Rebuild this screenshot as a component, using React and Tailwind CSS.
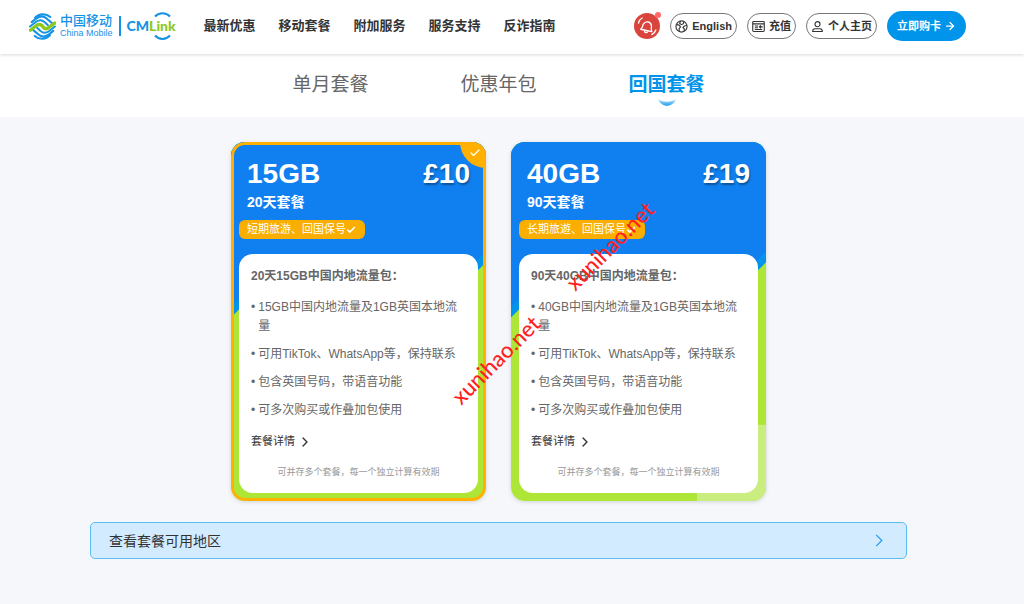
import React from "react";
import { LuArrowRight, LuCheck, LuChevronRight } from "react-icons/lu";

const navItems = ["最新优惠", "移动套餐", "附加服务", "服务支持", "反诈指南"];
const tabs = ["单月套餐", "优惠年包", "回国套餐"];

const sharedPerks = [
  "可用TikTok、WhatsApp等，保持联系",
  "包含英国号码，带语音功能",
  "可多次购买或作叠加包使用",
];

const plans = [
  { data: "15GB", days: "20天", price: "£10", tag: "短期旅游、回国保号", selected: true },
  { data: "40GB", days: "90天", price: "£19", tag: "长期旅遊、回国保号", selected: false },
];

function Logo() {
  return (
    <a href="#home" aria-label="中国移动 CMLink" className="flex items-center">
      <svg viewBox="0 0 80 80" className="h-[27px] w-[27px]" fill="none" strokeWidth="6" strokeLinecap="round">
        <g stroke="#1492e6">
          <path d="M18 14C30 1 50 0 63 12" />
          <path d="M8 27L22 16C33 8 44 9 52 16L68 30" />
          <path d="M3 40L21 26C31 19 39 20 46 27L56 36" />
          <path d="M62 66C50 79 30 80 17 68" />
          <path d="M72 53L58 64C47 72 36 71 28 64L12 50" />
          <path d="M77 40L59 54C49 61 41 60 34 53L24 44" />
        </g>
        <path d="M4 51L22 37C29 32 35 33 40 39L42 42C47 48 54 47 60 42L76 30" stroke="#8cc81e" strokeWidth="10" />
      </svg>
      <span className="ml-1 flex flex-col text-[#1492e6]">
        <span className="text-[13px] leading-[14px] font-medium">中国移动</span>
        <span className="text-[9px] leading-[11px]">China Mobile</span>
      </span>
      <span className="ml-1.5 h-5 w-0.5 bg-[#1492e6]" />
      <span className="relative ml-1.5 flex h-7 w-[50px] items-center font-['Lato',sans-serif] text-sm font-black text-[#1492e6]">
        CM<span className="text-[#8cc81e]">Link</span>
        <svg viewBox="0 0 52 28" className="absolute inset-0 h-7 w-[52px]" fill="none" stroke="#1492e6" strokeWidth="2">
          <path d="M28 4.500c4-4.500 11-4.500 15 0M28 23.500c4 4.500 11 4.500 15 0" />
        </svg>
      </span>
    </a>
  );
}

function GlobeIcon() {
  return (
    <svg viewBox="0 0 14 14" className="h-[13px] w-[13px]" fill="none" stroke="currentColor" strokeWidth="1.2">
      <circle cx="7" cy="7" r="6" />
      <path d="M1.500 5l3 .5 1.500 2-1.500 1.500v3.500M6 1.200L5 3.500l2 1.500 2-1 .5-2.500M12.800 6L10 6.500 8.500 8l1.500 1.500V12" />
    </svg>
  );
}

function TopUpIcon() {
  return (
    <svg viewBox="0 0 14 14" className="h-[13px] w-[13px]" fill="none" stroke="currentColor" strokeWidth="1.2">
      <rect x="0.800" y="1.600" width="12.400" height="10.800" rx="1" />
      <path d="M1 4.200h12M3 6.500h3.500M3 8.300h3.500M3 10.200h8M11.500 7.400H8M9.600 5.800L8 7.400l1.600 1.600" />
    </svg>
  );
}

function UserIcon() {
  return (
    <svg viewBox="0 0 14 14" className="h-[13px] w-[13px]" fill="none" stroke="currentColor" strokeWidth="1.200">
      <circle cx="7" cy="4.500" r="2.700" />
      <path d="M1.800 12.400c0-2 1-3 2.500-3h5.400c1.500 0 2.500 1 2.500 3z" strokeLinejoin="round" />
    </svg>
  );
}

function Bell() {
  return (
    <button type="button" aria-label="通知" className="relative h-[26px] w-[26px] rounded-full bg-[#d9453d]">
      <svg viewBox="0 0 26 26" className="h-full w-full" fill="none" stroke="#fff" strokeWidth="1.300" strokeLinecap="round" strokeLinejoin="round">
        <g transform="rotate(12 13 13)">
          <path d="M7.500 17.500c1.200-1.200 1.500-2 1.500-5.500a4.500 5 0 0 1 8.400 0c0 3.500.3 4.300 1.500 5.500zM11.500 17.900c.3 2.400 3 2.400 3.400 0" />
        </g>
        <path d="M4.500 10C5 7.800 6.300 6 8.200 5M21.800 17c-.6 2.200-1.900 3.700-4 4.600" />
      </svg>
      <span className="absolute -top-px -right-px h-1.5 w-1.5 rounded-full bg-[#ff6b6b]" />
    </button>
  );
}

function Pill({ icon, children }) {
  return (
    <button
      type="button"
      className="flex h-[26px] items-center gap-1 rounded-full border border-[#777] px-1 text-[11px] font-bold whitespace-nowrap text-[#333]"
    >
      {icon}
      {children}
    </button>
  );
}

function Header() {
  return (
    <header className="relative flex h-[54px] items-center bg-white pr-[58px] pb-0.5 pl-[29px] shadow-[0_1px_3px_rgba(0,0,0,0.15)]">
      <Logo />
      <nav className="ml-[27px] flex gap-[23px] text-[13px] font-bold whitespace-nowrap text-[#333]">
        {navItems.map((item) => (
          <a key={item} href="#nav">{item}</a>
        ))}
      </nav>
      <div className="ml-auto flex items-center gap-2.5">
        <Bell />
        <Pill icon={<GlobeIcon />}>English</Pill>
        <Pill icon={<TopUpIcon />}>充值</Pill>
        <Pill icon={<UserIcon />}>个人主页</Pill>
        <button type="button" className="flex h-[30px] items-center gap-[3px] rounded-full bg-[#0094ea] px-2.5 text-[11px] font-bold whitespace-nowrap text-white">
          立即购卡
          <LuArrowRight className="h-3 w-3" strokeWidth={2.5} />
        </button>
      </div>
    </header>
  );
}

function Tabs() {
  return (
    <div role="tablist" className="flex h-[63px] justify-center gap-[92px] bg-white pt-[17px] pr-[27px] text-[19px] leading-7 text-[#666]">
      {tabs.map((tab, i) => {
        const active = i === tabs.length - 1;
        return (
          <button
            key={tab}
            type="button"
            role="tab"
            aria-selected={active}
            className={active ? "flex flex-col items-center font-bold text-[#0094ea]" : "flex flex-col items-center"}
          >
            {tab}
            {active && (
              <svg viewBox="0 0 18 7" className="h-[7px] w-[18px]">
                <defs>
                  <linearGradient id="smile" x1="0" y1="0" x2="0" y2="1">
                    <stop offset="0" stopColor="#c5e7fb" />
                    <stop offset="1" stopColor="#1f9dee" />
                  </linearGradient>
                </defs>
                <path d="M0 0C4 3.500 14 3.500 18 0C15 9 3 9 0 0z" fill="url(#smile)" />
              </svg>
            )}
          </button>
        );
      })}
    </div>
  );
}

function CardArt({ selected }) {
  return (
    <svg viewBox="0 0 255 358" preserveAspectRatio="none" className="absolute inset-0 h-full w-full" aria-hidden="true">
      <rect width="255" height="358" fill="#aee637" />
      {!selected && <rect x="186" y="282" width="69" height="76" fill="#caed80" />}
      <path d="M0 0H255V120L225 150H25L0 175z" fill="#0294ea" />
      <path d="M0 0H255V109L225 139H25L0 164z" fill="#1080f0" />
    </svg>
  );
}

function PlanCard({ plan }) {
  const perks = [`${plan.data}中国内地流量及1GB英国本地流量`, ...sharedPerks];
  return (
    <article className="relative w-[255px] overflow-hidden rounded-[14px] px-2 pb-2 shadow-[0_1px_4px_rgba(0,0,0,0.15)]">
      <CardArt selected={plan.selected} />
      {plan.selected && (
        <>
          <div className="absolute inset-0 rounded-[14px] border-3 border-[#ffb000]" />
          <div className="absolute top-0 right-0 flex h-[26px] w-[26px] items-center justify-center rounded-bl-full bg-[#ffb000] pb-1 pl-1 text-white">
            <LuCheck className="h-3 w-3" strokeWidth={2.5} />
          </div>
        </>
      )}
      <div className="relative h-28 pt-4 text-white">
        <div className="flex justify-between px-2 text-[28px] leading-8 font-bold">
          <h2>{plan.data}</h2>
          <p className="[text-shadow:1px_2px_2px_rgba(0,0,0,0.35)]">{plan.price}</p>
        </div>
        <p className="px-2 text-sm leading-6 font-bold">{plan.days}套餐</p>
        <p className="mt-1.5 flex h-[19px] w-[126px] items-center rounded-md bg-[#f9ae00] pl-2 text-[11px] whitespace-nowrap">
          {plan.tag}
          <LuCheck className="h-2.5 w-2.5" strokeWidth={4} />
        </p>
      </div>
      <div className="relative rounded-[14px] bg-white px-3 pt-[13px] pb-[11px] text-xs leading-[19px] text-[#666]">
        <h3 className="font-bold">{plan.days}{plan.data}中国内地流量包：</h3>
        <ul className="mt-3 flex flex-col gap-[9px]">
          {perks.map((perk) => (
            <li key={perk} className="flex gap-[3px]">
              <span>•</span>
              <span>{perk}</span>
            </li>
          ))}
        </ul>
        <a href="#details" className="mt-3 flex items-center gap-0.5 text-[11px] text-[#333]">
          套餐详情
          <LuChevronRight className="h-4 w-4" />
        </a>
        <p className="mt-3 text-center text-[9px] text-[#999]">可并存多个套餐，每一个独立计算有效期</p>
      </div>
    </article>
  );
}

function Watermark({ className }) {
  return (
    <span className={`pointer-events-none absolute -rotate-45 font-['Lato',sans-serif] text-[22px] leading-6 font-medium text-[#ff1f1f] ${className}`}>
      xunihao.net
    </span>
  );
}

export default function App() {
  return (
    <div className="relative min-h-screen bg-[#f6f7fa] font-['Liberation_Sans','Noto_Sans_CJK_SC',sans-serif]">
      <Header />
      <Tabs />
      <main className="pt-[25px] pr-[117px] pb-11 pl-[90px]">
        <div className="flex justify-center gap-[25px]">
          {plans.map((plan) => (
            <PlanCard key={plan.data} plan={plan} />
          ))}
        </div>
        <button
          type="button"
          className="mt-[21px] flex h-[37px] w-full items-center justify-between rounded-[5px] border border-[#5bbcf3] bg-[#d3ebff] pr-[23px] pl-[18px] text-sm text-[#333]"
        >
          查看套餐可用地区
          <svg viewBox="0 0 8 14" className="h-[13px] w-2" fill="none" stroke="#1c9cf0" strokeWidth="1.300">
            <path d="M1 1l6 6-6 6" />
          </svg>
        </button>
      </main>
      <Watermark className="top-[348px] left-[439px]" />
      <Watermark className="top-[234px] left-[553px]" />
    </div>
  );
}
